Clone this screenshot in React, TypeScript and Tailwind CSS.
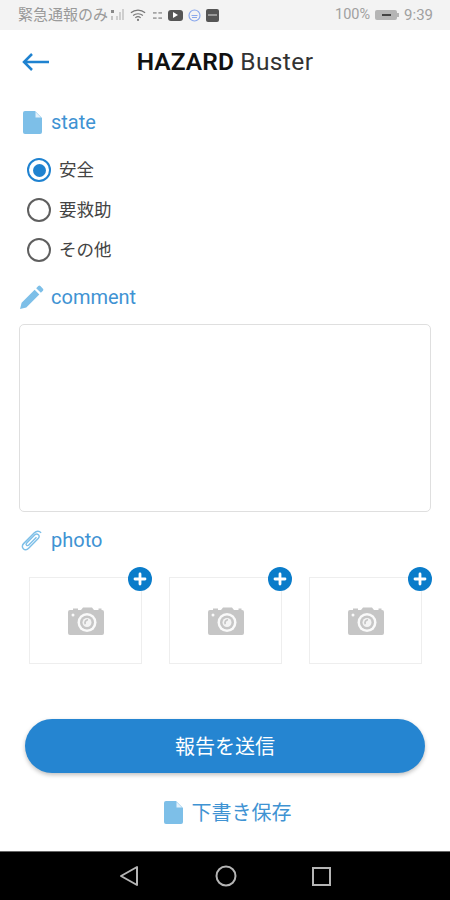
const font = { fontFamily: 'Roboto, "Noto Sans CJK JP", sans-serif' }

function FileIcon({ className }: { className: string }) {
  return (
    <svg viewBox="0 0 19 23" className={className}>
      <path d="M2 0h10l7 7v14a2 2 0 0 1-2 2H2a2 2 0 0 1-2-2V2a2 2 0 0 1 2-2z" fill="#7dbfe8" />
      <path d="M12.5 1v5.5H18z" fill="#e4f2fb" />
    </svg>
  )
}

function SectionLabel({ icon, label }: { icon: React.ReactNode; label: string }) {
  return (
    <div className="flex items-center h-6">
      <div className="w-[31px] flex items-center">{icon}</div>
      <span className="text-[20px] leading-6 text-[#3f93d3]">{label}</span>
    </div>
  )
}

function Radio({ label, checked }: { label: string; checked?: boolean }) {
  return (
    <div className="flex items-center h-[40px]">
      <div
        className={
          checked
            ? 'w-6 h-6 rounded-full border-2 border-[#1f82d0] flex items-center justify-center'
            : 'w-6 h-6 rounded-full border-2 border-[#5f5f5f]'
        }
      >
        {checked && <div className="w-[13px] h-[13px] rounded-full bg-[#1f82d0]" />}
      </div>
      <span className="ml-2 text-[17.5px] text-[#444444]">{label}</span>
    </div>
  )
}

function PhotoSlot() {
  return (
    <div className="relative w-[113px] h-[87px] border border-[#eeeeee] flex items-center justify-center">
      <svg viewBox="0 0 36 28" className="w-9 h-7">
        <path
          d="M2 3h3V1.500h5V3h3l2-2.500h9L26 3h4.500V1.500h3V3H34a2 2 0 0 1 2 2v21a2 2 0 0 1-2 2H2a2 2 0 0 1-2-2V5a2 2 0 0 1 2-2z"
          fill="#c6c6c6"
        />
        <circle cx="19" cy="15.500" r="9.500" fill="#fafafa" />
        <circle cx="19" cy="15.500" r="7" fill="#c6c6c6" />
        <circle cx="19" cy="15.500" r="4.500" fill="#f4f4f4" />
        <path d="M16.500 17.500a3.800 3.800 0 0 1 3.500-5.500v1.500a2.500 2.500 0 0 0-2 3.500z" fill="#c6c6c6" />
        <circle cx="5" cy="8" r="1.500" fill="#fafafa" />
      </svg>
      <div className="absolute -top-[11px] -right-[11px] w-6 h-6 rounded-full bg-[#0a7cca] flex items-center justify-center">
        <svg viewBox="0 0 14 14" className="w-[14px] h-[14px]">
          <path d="M7 2v10M2 7h10" stroke="white" strokeWidth="2.800" strokeLinecap="round" />
        </svg>
      </div>
    </div>
  )
}

export default function App() {
  return (
    <div className="w-[450px] h-[900px] bg-white flex flex-col overflow-hidden" style={font}>
      {/* status bar */}
      <div className="h-[30px] bg-[#f3f3f3] flex items-center pl-[18px] pr-[17px] text-[#9a9a9a]">
        <span className="text-[15px] leading-none">緊急通報のみ</span>
        <svg viewBox="0 0 16 14" className="w-4 h-[14px] ml-[2px]">
          <rect x="1" y="2" width="3" height="3" fill="#888888" />
          <path d="M7 12V8M10 12V4M13 12V1" stroke="#bbbbbb" strokeWidth="1.300" />
          <path d="M1 12h2V8H1z" fill="#c4c4c4" />
        </svg>
        <svg viewBox="0 0 18 14" className="w-4 h-[14px] ml-[4px]">
          <path
            d="M1 4.500c4.500-4 11.500-4 16 0M3.500 7.500c3-2.500 8-2.500 11 0M6 10c1.800-1.300 4.200-1.300 6 0"
            stroke="#777777"
            strokeWidth="1.300"
            fill="none"
          />
          <circle cx="9" cy="12.500" r="1.200" fill="#777777" />
        </svg>
        <svg viewBox="0 0 10 10" className="w-[9px] h-[9px] ml-[7px]">
          <path d="M0 1h4v2H0zM6 1h4v2H6zM0 7h4v2H0zM6 7h4v2H6z" fill="#a5a5a5" />
        </svg>
        <div className="ml-[6px] w-[15px] h-[11px] rounded-[3px] bg-[#555555] flex items-center justify-center">
          <div className="w-0 h-0 border-y-[3px] border-y-transparent border-l-[5px] border-l-white" />
        </div>
        <svg viewBox="0 0 13 13" className="w-[13px] h-[13px] ml-[5px]">
          <circle cx="6.500" cy="6.500" r="5.500" stroke="#8aa8ec" strokeWidth="1.200" fill="none" />
          <path d="M3.500 6.500h6M4 8.500h5" stroke="#8aa8ec" strokeWidth="1" />
        </svg>
        <div className="ml-[5px] w-[13px] h-[13px] rounded-[2px] bg-[#555555] flex items-center justify-center">
          <div className="w-[9px] h-[2px] bg-[#999999]" />
        </div>
        <div className="ml-auto flex items-center text-[14.5px] text-[#a0a0a0]">
          <span>100%</span>
          <div className="ml-[5px] w-[22px] h-[10px] rounded-[2px] bg-[#b5b5b5] flex items-center justify-center">
            <div className="w-[9px] h-[2px] bg-[#444444]" />
          </div>
          <div className="w-[2px] h-[4px] bg-[#b5b5b5] mr-[5px]" />
          <span className="text-[15px]">9:39</span>
        </div>
      </div>

      {/* header */}
      <div className="relative h-[64px] flex items-center justify-center">
        <svg viewBox="0 0 28 20" className="absolute left-[22px] top-[22px] w-7 h-5">
          <path d="M27 10H2M10 2l-8 8 8 8" stroke="#1f82d0" strokeWidth="2.500" fill="none" />
        </svg>
        <h1 className="text-[24.5px] leading-none text-[#111111] tracking-[0.1px]">
          <span className="font-semibold">HAZARD</span>{' '}
          <span className="text-[#333333] tracking-[0.4px]">Buster</span>
        </h1>
      </div>

      <div className="flex-1 flex flex-col px-5 pt-[16px]">
        <SectionLabel icon={<FileIcon className="w-[19px] h-[23px] ml-[3px]" />} label="state" />

        <div className="pl-[7px] mt-[16px]">
          <Radio label="安全" checked />
          <Radio label="要救助" />
          <Radio label="その他" />
        </div>

        <div className="mt-[15px]">
          <SectionLabel
            icon={
              <svg viewBox="0 0 24 24" className="w-[25px] h-[25px] -ml-[1px]">
                <path
                  d="M1 23l1.500-6L15 4.500l4.500 4.500L7 21.500zM16.500 3l2-2a1.500 1.500 0 0 1 2 0l2.500 2.500a1.500 1.500 0 0 1 0 2l-2 2z"
                  fill="#7dbfe8"
                />
              </svg>
            }
            label="comment"
          />
        </div>

        <div className="mt-[15px] -ml-[1px] w-[412px] h-[188px] border border-[#dfdfdf] rounded-[5px]" />

        <div className="mt-[16px]">
          <SectionLabel
            icon={
              <svg viewBox="0 0 24 24" className="w-[23px] h-[23px]">
                <path
                  d="M21 4c-2-2.500-5-2-7 0L3 15c-2 2-2 4-.500 5.500S6 22 8 20l10-10c1.300-1.300 1.300-3 .2-4s-2.700-1-4 .2L6 14.500c-.8.8-.8 1.800-.2 2.400s1.600.6 2.400-.2l8-8"
                  transform="translate(1 0)"
                  stroke="#7dbfe8"
                  strokeWidth="1.500"
                  fill="none"
                />
              </svg>
            }
            label="photo"
          />
        </div>

        <div className="mt-[25px] pl-[9px] flex gap-[27px]">
          <PhotoSlot />
          <PhotoSlot />
          <PhotoSlot />
        </div>

        <button className="mt-[55px] ml-[5px] w-[400px] h-[54px] shrink-0 rounded-full bg-[#2585d1] shadow-[0_2px_4px_rgba(0,0,0,0.25)] text-white text-[20px] pt-[2px]">
          報告を送信
        </button>

        <div className="mt-[27px] pl-[5px] flex items-center justify-center gap-[9px]">
          <FileIcon className="w-[19px] h-[23px]" />
          <span className="text-[20px] leading-6 text-[#3f93d3] pt-[1px]">下書き保存</span>
        </div>
      </div>

      {/* nav bar */}
      <div className="h-[49px] bg-black flex items-center justify-center gap-[75px] border-t border-[#666666]">
        <svg viewBox="0 0 20 22" className="w-5 h-[22px] -translate-x-[1px]">
          <path d="M18 2v18L2 11z" stroke="#b5b5b5" strokeWidth="2" fill="none" strokeLinejoin="round" />
        </svg>
        <svg viewBox="0 0 22 22" className="w-[22px] h-[22px]">
          <circle cx="11" cy="11" r="9.500" stroke="#b5b5b5" strokeWidth="2" fill="none" />
        </svg>
        <div className="w-[19px] h-[19px] border-2 border-[#b5b5b5]" />
      </div>
    </div>
  )
}
